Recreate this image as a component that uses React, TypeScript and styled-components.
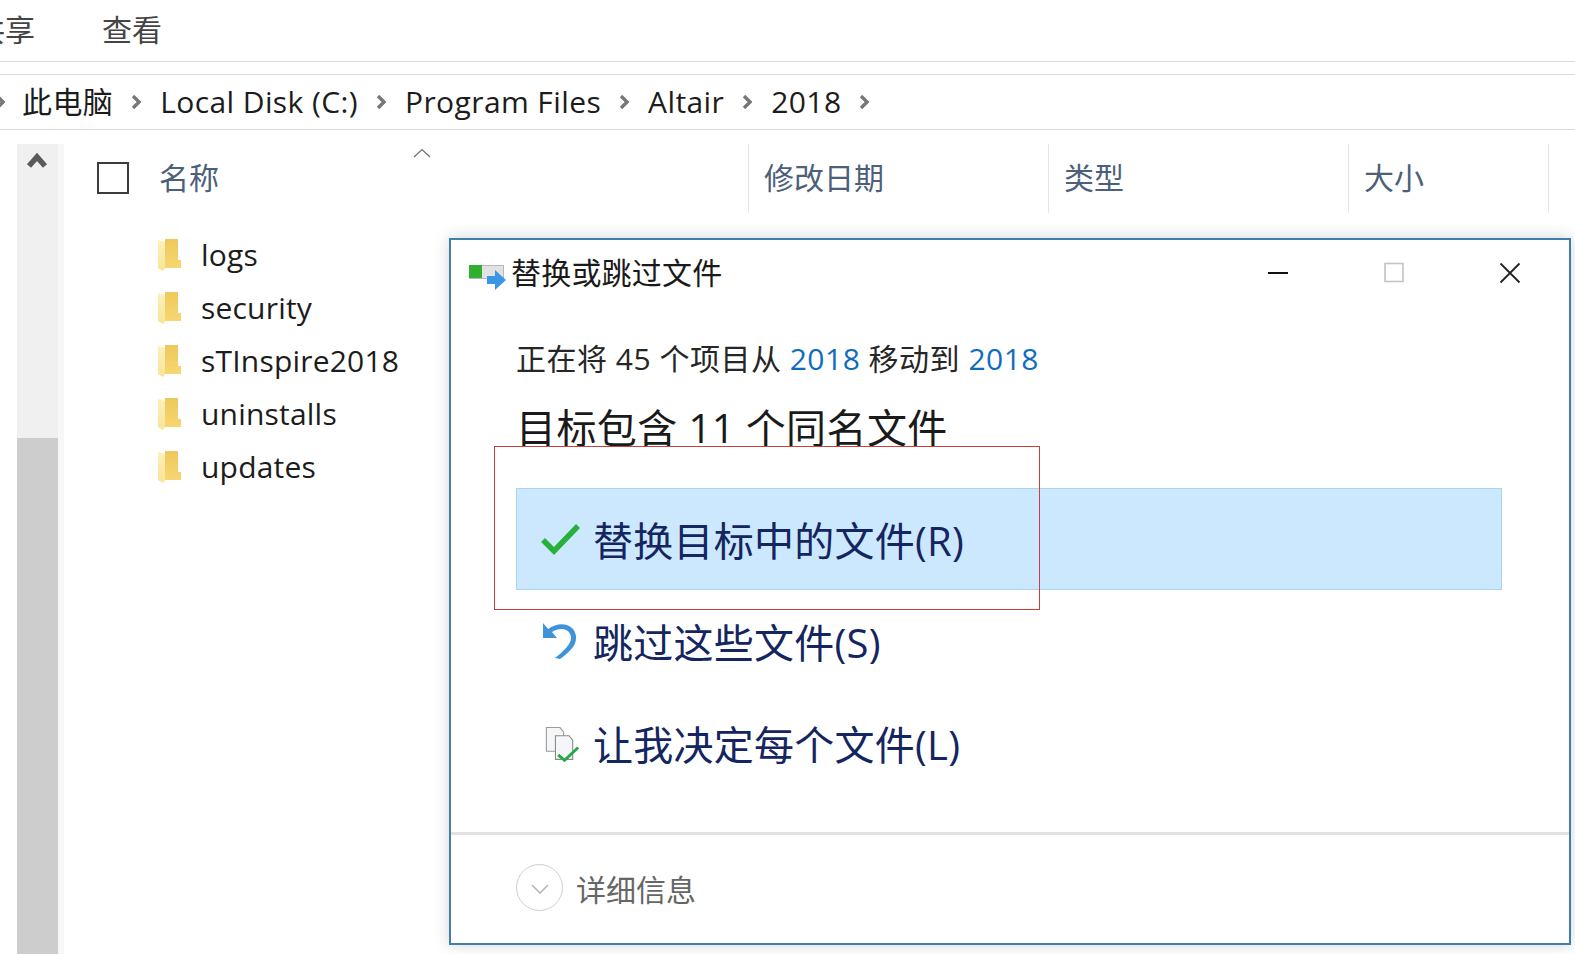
import { FC } from "react";
import styled, { createGlobalStyle } from "styled-components";

const FONT = `"Open Sans", "Noto Sans", "Noto Sans CJK SC", sans-serif`;

const crumbs = ["此电脑", "Local Disk (C:)", "Program Files", "Altair", "2018"];
const folders = ["logs", "security", "sTInspire2018", "uninstalls", "updates"];

const Chevron: FC = () => (
  <svg width="10" height="14" viewBox="0 0 10 14">
    <path d="M2 1 L8 7 L2 13" fill="none" stroke="#777" strokeWidth="3.4" />
  </svg>
);

const FolderIcon: FC = () => (
  <svg width="24" height="34" viewBox="0 0 24 34">
    <defs>
      <linearGradient id="fold" x1="0" y1="0" x2="0" y2="1">
        <stop offset="0" stopColor="#eec85a" />
        <stop offset="1" stopColor="#f7d672" />
      </linearGradient>
      <linearGradient id="foldFront" x1="0" y1="0" x2="0" y2="1">
        <stop offset="0" stopColor="#fdf0bb" />
        <stop offset="1" stopColor="#f9e394" />
      </linearGradient>
    </defs>
    <path d="M8 1 H21 V22 H24 V30 H8 Z" fill="url(#fold)" />
    <path d="M1 2 L8 4 V30 L6 33 L1 30 Z" fill="url(#foldFront)" />
  </svg>
);

const App: FC = () => {
  return (
    <Page>
      <GlobalStyle />
      <Toolbar>
        <ClippedTab>共享</ClippedTab>
        <Tab>查看</Tab>
      </Toolbar>
      <AddressBar>
        <EdgeChevron>
          <Chevron />
        </EdgeChevron>
        {crumbs.map((c) => (
          <Crumb key={c}>
            <span>{c}</span>
            <Chevron />
          </Crumb>
        ))}
      </AddressBar>
      <Body>
        <ScrollBar>
          <ScrollTrack>
            <svg width="22" height="18" viewBox="0 0 22 18">
              <path d="M3 15 L11 6 L19 15" fill="none" stroke="#5a5a5a" strokeWidth="5.5" />
            </svg>
          </ScrollTrack>
          <ScrollThumb />
        </ScrollBar>
        <ListPane>
          <HeaderRow>
            <CheckBox />
            <NameColumn>
              名称
              <SortCaret width="18" height="10" viewBox="0 0 18 10">
                <path d="M1 9 L9 1.5 L17 9" fill="none" stroke="#707070" strokeWidth="1.2" />
              </SortCaret>
            </NameColumn>
            <HeaderColumn $width={300}>修改日期</HeaderColumn>
            <HeaderColumn $width={300}>类型</HeaderColumn>
            <HeaderColumn $width={200}>大小</HeaderColumn>
          </HeaderRow>
          <Rows>
            {folders.map((f) => (
              <FolderRow key={f}>
                <FolderIcon />
                <span>{f}</span>
              </FolderRow>
            ))}
          </Rows>
        </ListPane>
      </Body>

      <Dialog>
        <TitleBar>
          <TitleIcon width="38" height="28" viewBox="0 0 38 28">
            <rect x="0.5" y="1.5" width="34" height="13" fill="#e2e2e2" stroke="#b8b8b8" />
            <rect x="0" y="1" width="13" height="13" fill="#2fb02f" />
            <path d="M18 12 H26 V6 L37 16 L26 26 V20 H18 Z" fill="#3b97e3" />
          </TitleIcon>
          <TitleText>替换或跳过文件</TitleText>
          <WindowButtons>
            <svg width="22" height="22" viewBox="0 0 22 22">
              <path d="M1 11 H21" stroke="#111" strokeWidth="2" />
            </svg>
            <svg width="22" height="22" viewBox="0 0 22 22">
              <rect x="2" y="1.5" width="18" height="18" fill="none" stroke="#c4c4c4" strokeWidth="1.6" />
            </svg>
            <svg width="22" height="22" viewBox="0 0 22 22">
              <path d="M1.5 1.5 L20.5 20.5 M20.5 1.5 L1.5 20.5" stroke="#222" strokeWidth="1.8" />
            </svg>
          </WindowButtons>
        </TitleBar>
        <Content>
          <Status>
            正在将 45 个项目从 <StatusLink>2018</StatusLink> 移动到 <StatusLink>2018</StatusLink>
          </Status>
          <Heading>目标包含 11 个同名文件</Heading>
          <Options>
            <Option $selected>
              <OptionIcon>
                <svg width="40" height="32" viewBox="-1 0 40 32">
                  <path d="M2 17 L13 28 L37 3" fill="none" stroke="#27b03c" strokeWidth="5.5" />
                </svg>
              </OptionIcon>
              替换目标中的文件(R)
            </Option>
            <Option>
              <OptionIcon>
                <svg width="36" height="38" viewBox="0 0 36 38">
                  <path d="M1 1 V16 H15 L10 10 C17 5 28 6 29 15 C30 21 22 29 13 36 L18 37 C27 30 35 24 34 14 C32 1 17 -1 6 7 Z" fill="#3f93db" />
                </svg>
              </OptionIcon>
              跳过这些文件(S)
            </Option>
            <Option>
              <OptionIcon>
                <svg width="44" height="44" viewBox="-6 -4 44 44">
                  <path d="M1 1 H16 L20 6 V27 H1 Z" fill="#f4f6f8" stroke="#9a9a9a" strokeWidth="1.2" />
                  <path d="M11 10 H26 L30 15 V36 H11 Z" fill="#f4f6f8" stroke="#8a8a8a" strokeWidth="1.2" />
                  <path d="M14 31 L21 37 L36 23" fill="none" stroke="#25a84a" strokeWidth="3.2" />
                </svg>
              </OptionIcon>
              让我决定每个文件(L)
            </Option>
          </Options>
        </Content>
        <Footer>
          <ExpandCircle>
            <svg width="18" height="10" viewBox="0 0 18 10">
              <path d="M1 1 L9 9 L17 1" fill="none" stroke="#b5b5b5" strokeWidth="1.6" />
            </svg>
          </ExpandCircle>
          详细信息
        </Footer>
        <RedFrame />
      </Dialog>
    </Page>
  );
};

const GlobalStyle = createGlobalStyle`
  html, body {
    margin: 0;
    padding: 0;
    background: #fff;
    overflow: hidden;
  }
`;

const Page = styled.div`
  position: relative;
  width: 1575px;
  height: 954px;
  overflow: hidden;
  background: #fff;
  font-family: ${FONT};
  color: #1a1a1a;
`;

const Toolbar = styled.div`
  display: flex;
  align-items: center;
  gap: 67px;
  height: 62px;
  padding-bottom: 2px;
  box-sizing: border-box;
  border-bottom: 1px solid #d9d9d9;
  font-size: 30px;
  color: #444;
`;

const Tab = styled.div`
  line-height: 40px;
`;

const ClippedTab = styled(Tab)`
  margin-left: -25px;
`;

const AddressBar = styled.div`
  display: flex;
  align-items: center;
  height: 56px;
  margin-top: 12px;
  box-sizing: border-box;
  border-top: 1px solid #d9d9d9;
  border-bottom: 1px solid #d9d9d9;
  padding-left: 22px;
  font-size: 30px;
  color: #1c1c1c;
  position: relative;
`;

const EdgeChevron = styled.div`
  position: absolute;
  left: -5px;
  top: 20px;
  display: flex;
`;

const Crumb = styled.div`
  display: flex;
  align-items: center;
  gap: 18px;
  margin-right: 19px;
  line-height: 40px;
  white-space: nowrap;
  letter-spacing: 0.4px;
`;

const Body = styled.div`
  display: flex;
  height: 824px;
  padding: 14px 0 0 17px;
  box-sizing: border-box;
`;

const ScrollBar = styled.div`
  display: flex;
  flex-direction: column;
  width: 41px;
  flex: none;
  border-right: 6px solid #f7f7f7;
`;

const ScrollTrack = styled.div`
  display: flex;
  justify-content: center;
  align-items: flex-start;
  height: 294px;
  padding: 7px 2px 0 0;
  box-sizing: border-box;
  background: #f0f0f0;
`;

const ScrollThumb = styled.div`
  flex: 1;
  background: #cdcdcd;
`;

const ListPane = styled.div`
  flex: 1;
  display: flex;
  flex-direction: column;
`;

const HeaderRow = styled.div`
  display: flex;
  align-items: stretch;
  height: 69px;
  padding-left: 33px;
  font-size: 30px;
  color: #4c607a;
`;

const CheckBox = styled.div`
  width: 32px;
  height: 32px;
  margin-top: 18px;
  box-sizing: border-box;
  border: 2px solid #3c3c3c;
  flex: none;
`;

const NameColumn = styled.div`
  position: relative;
  display: flex;
  align-items: center;
  width: 590px;
  margin-left: 30px;
  padding-bottom: 2px;
  line-height: 40px;
  border-right: 1px solid #e5e5e5;
  box-sizing: border-box;
`;

const SortCaret = styled.svg`
  position: absolute;
  left: 254px;
  top: 4px;
`;

const HeaderColumn = styled.div<{ $width: number }>`
  display: flex;
  align-items: center;
  width: ${(p) => p.$width}px;
  padding: 0 0 2px 15px;
  box-sizing: border-box;
  border-right: 1px solid #e5e5e5;
  line-height: 40px;
`;

const Rows = styled.div`
  display: flex;
  flex-direction: column;
  padding: 15px 0 0 93px;
`;

const FolderRow = styled.div`
  display: flex;
  align-items: center;
  gap: 20px;
  height: 53px;
  font-size: 30px;
  letter-spacing: 0.2px;
  color: #1c1c1c;
`;

const Dialog = styled.div`
  position: absolute;
  left: 449px;
  top: 238px;
  width: 1122px;
  height: 707px;
  box-sizing: border-box;
  display: flex;
  flex-direction: column;
  background: #fff;
  border: 2px solid #3f7fa8;
  box-shadow: 0 0 14px rgba(40, 60, 90, 0.22);
`;

const TitleBar = styled.div`
  display: flex;
  align-items: center;
  height: 66px;
  padding: 0 48px 0 18px;
  flex: none;
`;

const TitleIcon = styled.svg`
  margin-top: 9px;
  flex: none;
`;

const TitleText = styled.div`
  margin-left: 4px;
  font-size: 30px;
  line-height: 40px;
  letter-spacing: 0.2px;
  color: #1a1a1a;
`;

const WindowButtons = styled.div`
  display: flex;
  align-items: center;
  gap: 94px;
  margin-left: auto;
`;

const Content = styled.div`
  flex: 1;
  padding: 33px 67px 0 65px;
`;

const Status = styled.div`
  font-size: 30px;
  line-height: 40px;
  letter-spacing: 0.5px;
  color: #262626;
`;

const StatusLink = styled.span`
  color: #0f6cbd;
`;

const Heading = styled.div`
  margin-top: 19px;
  font-size: 40px;
  line-height: 60px;
  letter-spacing: 0.4px;
  color: #1a1a1a;
`;

const Options = styled.div`
  display: flex;
  flex-direction: column;
  margin-top: 30px;
`;

const Option = styled.div<{ $selected?: boolean }>`
  display: flex;
  align-items: center;
  height: 102px;
  box-sizing: border-box;
  font-size: 40px;
  letter-spacing: 0.25px;
  color: #14255f;
  background: ${(p) => (p.$selected ? "#cce8ff" : "transparent")};
  outline: ${(p) => (p.$selected ? "1px solid #a8d4f0" : "none")};
  outline-offset: -1px;
`;

const OptionIcon = styled.div`
  display: flex;
  justify-content: center;
  align-items: center;
  width: 40px;
  margin: 0 13px 0 24px;
  flex: none;
`;

const Footer = styled.div`
  display: flex;
  align-items: center;
  gap: 13px;
  height: 111px;
  flex: none;
  box-sizing: border-box;
  padding: 0 0 3px 65px;
  border-top: 3px solid #e2e2e2;
  font-size: 30px;
  color: #666;
`;

const ExpandCircle = styled.div`
  display: flex;
  justify-content: center;
  align-items: center;
  width: 47px;
  height: 47px;
  box-sizing: border-box;
  border: 1px solid #cfcfcf;
  border-radius: 50%;
  padding-top: 3px;
`;

const RedFrame = styled.div`
  position: absolute;
  left: 43px;
  top: 206px;
  width: 546px;
  height: 164px;
  box-sizing: border-box;
  border: 1px solid #c8403c;
  pointer-events: none;
`;

export default App;
